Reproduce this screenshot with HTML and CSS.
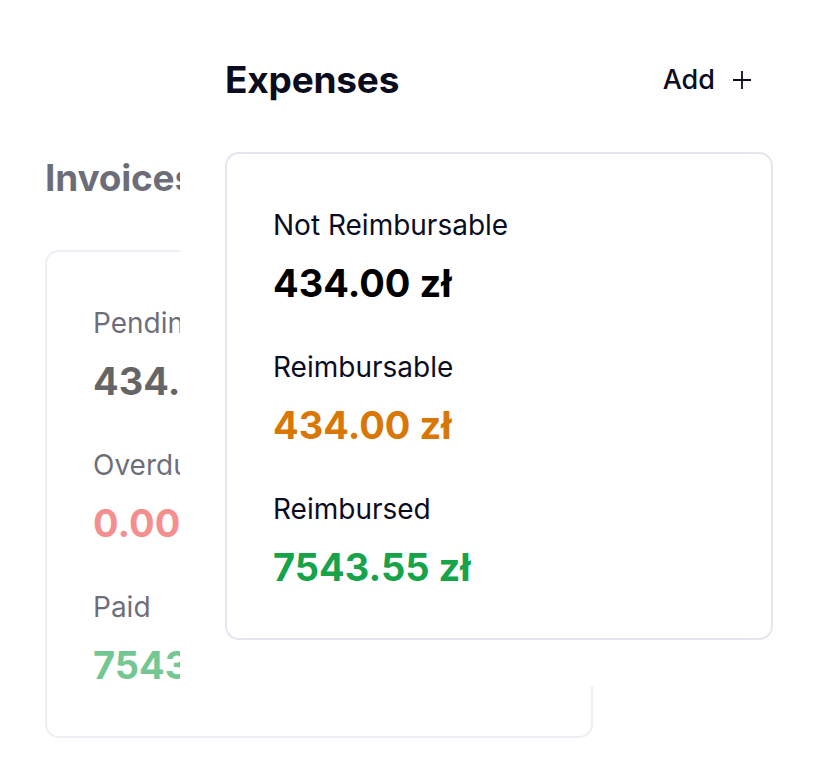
FILE: index.html
```html
<!DOCTYPE html>
<html lang="en">
<head>
<meta charset="utf-8">
<title>Expenses</title>
<link rel="stylesheet" href="styles.css">
</head>
<body>
<div class="stage">
  <section class="page page-back">
    <header class="page-head">
      <h1 class="page-title">Invoices</h1>
    </header>
    <div class="card">
      <div class="stat">
        <div class="stat-label">Pending</div>
        <div class="stat-value neutral">434.00 zł</div>
      </div>
      <div class="stat">
        <div class="stat-label">Overdue</div>
        <div class="stat-value danger">0.00 zł</div>
      </div>
      <div class="stat">
        <div class="stat-label">Paid</div>
        <div class="stat-value success">7543.55 zł</div>
      </div>
    </div>
  </section>

  <section class="page page-front">
    <header class="page-head">
      <h1 class="page-title">Expenses</h1>
      <button class="add-btn" type="button">Add
        <svg class="add-icon" viewBox="0 0 20 20" width="20" height="20" aria-hidden="true">
          <path d="M10 1v18M1 10h18" fill="none" stroke="currentColor" stroke-width="1.8"/>
        </svg>
      </button>
    </header>
    <div class="card">
      <div class="stat">
        <div class="stat-label">Not Reimbursable</div>
        <div class="stat-value plain">434.00 zł</div>
      </div>
      <div class="stat">
        <div class="stat-label">Reimbursable</div>
        <div class="stat-value warning">434.00 zł</div>
      </div>
      <div class="stat">
        <div class="stat-label">Reimbursed</div>
        <div class="stat-value success">7543.55 zł</div>
      </div>
    </div>
  </section>
</div>
</body>
</html>
```

FILE: styles.css
```css
* { box-sizing: border-box; }

html, body {
  margin: 0;
  padding: 0;
  background: #ffffff;
}

body {
  width: 818px;
  height: 784px;
  overflow: hidden;
  font-family: Inter, "Noto Sans", "Liberation Sans", sans-serif;
  color: #0b0d1f;
}

.stage {
  position: relative;
  width: 818px;
  height: 784px;
}

.page {
  width: 638px;
  padding: 0 45px;
}

.page-back {
  padding-top: 158px;
  opacity: 0.6;
}

.page-front {
  position: absolute;
  left: 180px;
  top: 0;
  height: 686px;
  padding-top: 60px;
  background: #ffffff;
}

.page-head {
  display: flex;
  align-items: center;
  justify-content: space-between;
  height: 40px;
}

.page-title {
  margin: 0;
  font-size: 37px;
  line-height: 40px;
  font-weight: 700;
  letter-spacing: -0.2px;
  color: #0b0d1f;
}

.add-btn {
  display: flex;
  align-items: center;
  gap: 17px;
  margin-right: 21px;
  padding: 0;
  border: 0;
  background: none;
  font-family: inherit;
  font-size: 27px;
  line-height: 32px;
  font-weight: 500;
  color: #0b0d1f;
}

.add-icon { display: block; }

.card {
  margin-top: 52px;
  height: 488px;
  padding: 55px 46px 0;
  border: 2px solid #e3e6ef;
  border-radius: 14px;
  background: #ffffff;
}

.stat + .stat { margin-top: 48px; }

.stat-label {
  font-size: 28px;
  line-height: 32px;
  font-weight: 400;
  color: #0b0d1f;
}

.stat-value {
  margin-top: 22px;
  font-size: 38px;
  line-height: 40px;
  font-weight: 700;
  white-space: nowrap;
}

.plain { color: #000000; }
.neutral { color: #000000; }
.warning { color: #d97706; }
.success { color: #16a34a; }
.danger { color: #ef4444; }
```
